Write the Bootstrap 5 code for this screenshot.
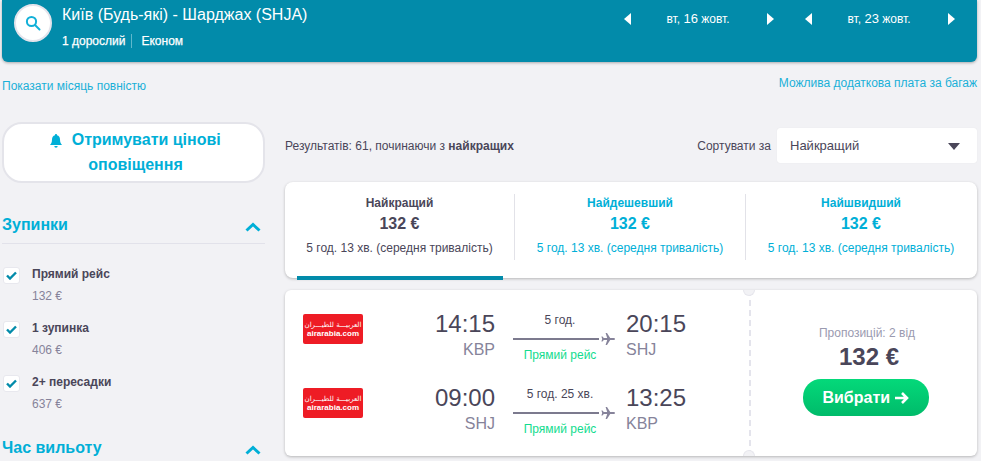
<!DOCTYPE html>
<html lang="uk">
<head>
<meta charset="utf-8">
<title>Київ - Шарджах</title>
<link href="https://cdn.jsdelivr.net/npm/bootstrap@5.3.0/dist/css/bootstrap.min.css" rel="stylesheet">
<style>
html,body{height:461px;overflow:hidden}
body{background:#f2f2f5;font-family:"Liberation Sans",Arial,sans-serif;font-size:12px;color:#4a4659;line-height:1.25}
.pg{padding:0 4px 0 2px}
.hdr{height:62px;background:#028baa;border-radius:0 0 6px 6px;box-shadow:0 1px 3px rgba(0,0,0,.3);color:#fff;padding:4px 0 0 12px}
.srch{width:38px;height:38px;border-radius:50%;background:#fff;border:2px solid #e4e4ec;margin-right:10px}
.rt{font-size:16px;line-height:20px;margin-top:1px}
.pax{font-size:12px;line-height:14px;margin-top:9px;-webkit-text-stroke:.25px #fff}
.pax span+span{border-left:1px solid #5fb8cc;margin-left:6px;padding-left:9px}
.dts{padding-right:22px;gap:31px}
.dt{width:150px;height:30px}
.dt b{font-weight:400;font-size:12px;flex:1;text-align:center;padding-right:2px}
.dt b i{font-style:normal;font-size:13px}
.lnks{height:60px;color:#1ab0d8;padding-top:14px}
.lnks a{color:inherit;text-decoration:none}
.lnks a:first-child{margin-top:3px}
.side{width:263px;margin-right:20px}
.alrt{height:61px;background:#fff;border:2px solid #e4e4ea;border-radius:20px;color:#00afd7;font-size:16px;font-weight:700;line-height:25px;text-align:center;padding:3px 26px 3px 30px}
.alrt svg{margin-right:5px}
.fh{color:#00afd7;font-size:16px;font-weight:700;line-height:20px}
.fh svg{margin-top:3px}
.fh1{margin-top:32px;padding-bottom:8px;border-bottom:1px solid #e2e2ea}
.fh2{margin-top:10px}
.ck{width:17px;height:17px;background:#fff;border:1px solid #e8e8ee;border-radius:3px;margin:1px 12px 0 1px}
.fi{height:54px}
.fi1{margin-top:22px}
.fn{font-weight:600;line-height:14px;color:#4a4659;margin-top:1px}
.fp{color:#86839a;line-height:14px;margin-top:8px}
.main{width:692px}
.sbar{height:35px;margin-top:6px}
.sbtx{padding-top:1px}
.sel{width:200px;height:35px;background:#fff;border-radius:3px;box-shadow:0 0 1px rgba(0,0,0,.1);padding:1px 17px 0 13px;margin-left:6px;font-size:13px}
.tabs{height:96px;margin-top:19px;background:#fff;border-radius:8px;box-shadow:0 1px 3px rgba(0,0,0,.25);padding:12px 0 0}
.tb{width:231px;height:66px;text-align:center;color:#00afd7;padding-top:2px}
.tb+.tb{border-left:1px solid #e2e2e8}
.tb1{width:229px;color:#4a4659}
.tb strong{display:block;font-size:12px;line-height:14px}
.tb em{display:block;font-style:normal;font-weight:700;font-size:16px;line-height:20px;margin-top:4px}
.tb span{display:block;line-height:14px;margin-top:7px}
.ubar{width:206px;height:4px;background:#028baa;margin:16px 0 0 12px}
.fc{height:166px;margin-top:12px;background:#fff;border-radius:6px;box-shadow:0 1px 3px rgba(0,0,0,.25);position:relative}
.legs{width:466px;padding:20px 0 0 18px;border-right:2px dashed #e4e4ec}
.leg{height:74px}
.lg{width:60px;height:30px;background:#ee1c25;border-radius:2px;color:#fff;margin-top:4px;line-height:1}
.lg u{text-decoration:none;font-size:7px;line-height:9px;font-family:"DejaVu Sans",sans-serif}
.lg s{text-decoration:none;font-size:8px;font-weight:700;line-height:8px}
.tm{width:132px;text-align:right}
.tm2{width:auto;text-align:left}
.tm div,.tm2 div{font-size:24px;line-height:28px;color:#4a4659}
.tm p,.tm2 p{font-size:16px;line-height:18px;color:#86839a;margin:3px 0 0}
.mid{width:113px;margin-left:18px;text-align:left}
.mid p{margin:0;width:94px;text-align:center;line-height:14px;white-space:nowrap}
.mid p:first-child{margin-top:3px}
.mid p:last-child{color:#12dc8e;margin-top:3px}
.ln{width:102px;margin-top:5px;height:13px}
.ln hr{width:86px;height:2px;background:#7c7a8e;border:0;opacity:1;margin:0}
.buy{flex:1;text-align:center;padding:36px 0 0 3px}
.buy p{margin:0;color:#9a9ab0;line-height:14px;padding-left:3px}
.buy h5{font-size:24px;font-weight:700;line-height:28px;margin:3px 0 8px;color:#4a4659;padding-left:7px}
.go{width:126px;height:37px;border:0;border-radius:18px;background:linear-gradient(#04d97a,#00bb6a);color:#fff;font-size:16px;font-weight:700;padding:0}
.ntc{position:absolute;left:458px;width:12px;height:6px;background:#f2f2f5;border:1px solid #e6e6ec}
.nt{top:0;border-top:0;border-radius:0 0 6px 6px}
.nb{bottom:0;border-bottom:0;border-radius:6px 6px 0 0}
</style>
</head>
<body>
<div class="pg">
  <header class="hdr d-flex">
    <div class="srch d-flex align-items-center justify-content-center">
      <svg width="16" height="16" viewBox="0 0 16 16" fill="none" stroke="#12b0d8" stroke-width="2"><circle cx="6.5" cy="6.5" r="4.6"/><path d="M10 10l4.500 4.500" stroke-linecap="round"/></svg>
    </div>
    <div class="flex-grow-1">
      <div class="rt">Київ (Будь-які) - Шарджах (SHJA)</div>
      <div class="pax"><span>1 дорослий</span><span>Економ</span></div>
    </div>
    <div class="dts d-flex align-self-start">
      <div class="dt d-flex align-items-center">
        <svg width="7" height="12" viewBox="0 0 7 12" fill="#fff"><path d="M7 0v12L0 6z"/></svg><b>вт, <i>16</i> жовт.</b><svg width="7" height="12" viewBox="0 0 7 12" fill="#fff"><path d="M0 0v12l7-6z"/></svg>
      </div>
      <div class="dt d-flex align-items-center">
        <svg width="7" height="12" viewBox="0 0 7 12" fill="#fff"><path d="M7 0v12L0 6z"/></svg><b>вт, <i>23</i> жовт.</b><svg width="7" height="12" viewBox="0 0 7 12" fill="#fff"><path d="M0 0v12l7-6z"/></svg>
      </div>
    </div>
  </header>
  <div class="lnks d-flex justify-content-between">
    <a href="#">Показати місяць повністю</a>
    <a href="#">Можлива додаткова плата за багаж</a>
  </div>
  <div class="d-flex">
    <aside class="side">
      <div class="alrt">
        <svg width="12" height="14" viewBox="0 0 12 14" fill="#00afd7"><path d="M6 0a1 1 0 0 1 1 1.200C9 1.700 10 3.400 10 5.500c0 3 1 4.300 2 5.500H0c1-1.200 2-2.500 2-5.500C2 3.400 3 1.700 5 1.200A1 1 0 0 1 6 0zM4.300 12h3.400a1.700 1.700 0 0 1-3.400 0z"/></svg>
        Отримувати цінові оповіщення
      </div>
      <div class="fh fh1 d-flex justify-content-between align-items-center">Зупинки
        <svg class="me-1" width="16" height="10" viewBox="0 0 16 10" fill="none" stroke="#00afd7" stroke-width="3"><path d="M1.500 8.500L8 2.500l6.500 6"/></svg>
      </div>
      <div class="fi fi1 d-flex">
        <div class="ck d-flex align-items-center justify-content-center"><svg width="11" height="9" viewBox="0 0 11 9" fill="none" stroke="#028baa" stroke-width="2.400"><path d="M1 4.500l3 3 6-6"/></svg></div>
        <div><div class="fn">Прямий рейс</div><div class="fp">132 €</div></div>
      </div>
      <div class="fi d-flex">
        <div class="ck d-flex align-items-center justify-content-center"><svg width="11" height="9" viewBox="0 0 11 9" fill="none" stroke="#028baa" stroke-width="2.400"><path d="M1 4.500l3 3 6-6"/></svg></div>
        <div><div class="fn">1 зупинка</div><div class="fp">406 €</div></div>
      </div>
      <div class="fi d-flex">
        <div class="ck d-flex align-items-center justify-content-center"><svg width="11" height="9" viewBox="0 0 11 9" fill="none" stroke="#028baa" stroke-width="2.400"><path d="M1 4.500l3 3 6-6"/></svg></div>
        <div><div class="fn">2+ пересадки</div><div class="fp">637 €</div></div>
      </div>
      <div class="fh fh2 d-flex justify-content-between align-items-center">Час вильоту
        <svg class="me-1" width="16" height="10" viewBox="0 0 16 10" fill="none" stroke="#00afd7" stroke-width="3"><path d="M1.500 8.500L8 2.500l6.500 6"/></svg>
      </div>
    </aside>
    <main class="main">
      <div class="sbar d-flex align-items-center">
        <div class="sbtx flex-grow-1">Результатів: 61, починаючи з <strong>найкращих</strong></div>
        <div class="sbtx">Сортувати за</div>
        <div class="sel d-flex align-items-center justify-content-between">Найкращий
          <svg width="12" height="7" viewBox="0 0 12 7" fill="#4a4659"><path d="M0 0h12L6 7z"/></svg>
        </div>
      </div>
      <div class="tabs">
        <div class="d-flex">
          <div class="tb tb1"><strong>Найкращий</strong><em>132 €</em><span>5 год. 13 хв. (середня тривалість)</span></div>
          <div class="tb"><strong>Найдешевший</strong><em>132 €</em><span>5 год. 13 хв. (середня тривалість)</span></div>
          <div class="tb"><strong>Найшвидший</strong><em>132 €</em><span>5 год. 13 хв. (середня тривалість)</span></div>
        </div>
        <div class="ubar"></div>
      </div>
      <div class="fc d-flex">
        <span class="ntc nt"></span><span class="ntc nb"></span>
        <div class="legs">
          <div class="leg d-flex">
            <div class="lg d-flex flex-column align-items-center justify-content-center"><u>العربيـــة للطيـــران</u><s>airarabia.com</s></div>
            <div class="tm"><div>14:15</div><p>KBP</p></div>
            <div class="mid"><p>5 год.</p>
              <div class="ln d-flex align-items-center justify-content-between"><hr><svg width="14" height="12" viewBox="0 0 14 12" fill="#86839a"><path d="M14 6c0-.6-.7-1-1.500-1H9.200L6 0H4.600l1.600 5H2.800L1.500 3.500H.4L1.200 6 .4 8.500h1.100L2.800 7h3.400l-1.600 5H6l3.200-5h3.300c.8 0 1.500-.4 1.500-1z"/></svg></div>
              <p>Прямий рейс</p></div>
            <div class="tm2"><div>20:15</div><p>SHJ</p></div>
          </div>
          <div class="leg d-flex">
            <div class="lg d-flex flex-column align-items-center justify-content-center"><u>العربيـــة للطيـــران</u><s>airarabia.com</s></div>
            <div class="tm"><div>09:00</div><p>SHJ</p></div>
            <div class="mid"><p>5 год. 25 хв.</p>
              <div class="ln d-flex align-items-center justify-content-between"><hr><svg width="14" height="12" viewBox="0 0 14 12" fill="#86839a"><path d="M14 6c0-.6-.7-1-1.500-1H9.200L6 0H4.600l1.600 5H2.800L1.500 3.500H.4L1.200 6 .4 8.500h1.100L2.800 7h3.400l-1.600 5H6l3.200-5h3.300c.8 0 1.500-.4 1.500-1z"/></svg></div>
              <p>Прямий рейс</p></div>
            <div class="tm2"><div>13:25</div><p>KBP</p></div>
          </div>
        </div>
        <div class="buy">
          <p>Пропозицій: 2 від</p>
          <h5>132 €</h5>
          <button class="go" type="button">Вибрати <svg width="14" height="12" viewBox="0 0 14 12" fill="none" stroke="#fff" stroke-width="2.600"><path d="M0 6h12M7 1l5 5-5 5"/></svg></button>
        </div>
      </div>
    </main>
  </div>
</div>
</body>
</html>
